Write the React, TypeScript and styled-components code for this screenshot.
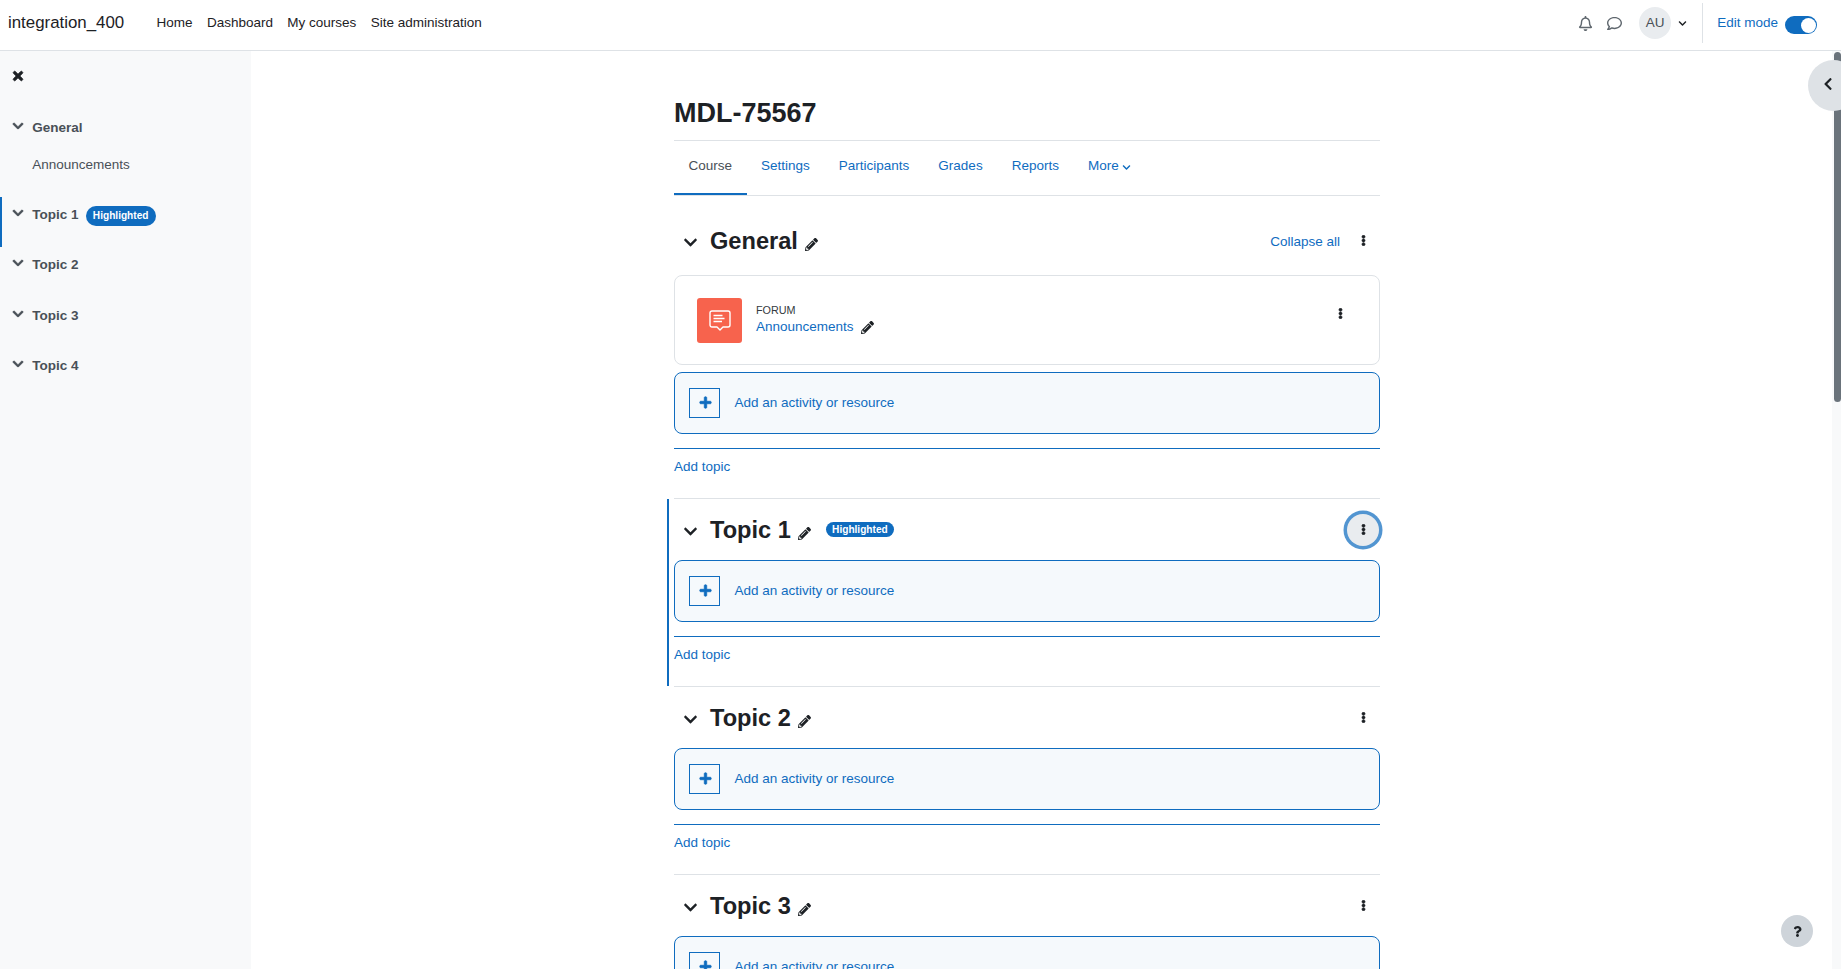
import React from "react";
import styled, { createGlobalStyle } from "styled-components";
import { FaChevronDown, FaChevronLeft, FaEllipsisV, FaPencilAlt, FaPlus, FaTimes, FaQuestion, FaRegBell, FaRegComment } from "react-icons/fa";

const Global = createGlobalStyle`
  * { box-sizing: border-box; }
  html, body { margin: 0; height: 100%; overflow: hidden; background: #fff; }
  body { font-family: "Liberation Sans", Arial, sans-serif; font-size: 13.5px; color: #1d2125; }
  a { text-decoration: none; color: inherit; }
`;

const Shell = styled.div`
  height: 969px;
  display: flex;
  flex-direction: column;
  position: relative;
  overflow: hidden;
`;

const TopBar = styled.header`
  height: 51px;
  flex: none;
  display: flex;
  align-items: center;
  background: #fff;
  border-bottom: 1px solid #dee2e6;
  padding: 0 24px 4px 8px;
`;

const Brand = styled.a`
  font-size: 16.875px;
  width: 148.5px;
  flex: none;
`;

const Nav = styled.nav`
  display: flex;
  gap: 14.4px;
  flex: 1;
  margin-top: -1px;
`;

const Tools = styled.div`
  display: flex;
  align-items: center;
  color: #5f676e;
`;

const ToolIcon = styled.span`
  display: flex;
  width: 15px;
  margin-right: 14px;
`;

const Avatar = styled.span`
  width: 32px;
  height: 32px;
  border-radius: 50%;
  background: #e9ecef;
  color: #495057;
  display: flex;
  align-items: center;
  justify-content: center;
  margin-left: 3px;
  padding-bottom: 1px;
`;

const Caret = styled.span`
  display: flex;
  color: #1d2125;
  margin: 1px 15px 0 7px;
`;

const Divider = styled.span`
  width: 1px;
  height: 40px;
  background: #dee2e6;
  margin-right: 14px;
`;

const EditLabel = styled.span`
  color: #0f6cbf;
  margin: -1px 7px 0 0;
`;

const Toggle = styled.span`
  width: 32px;
  height: 18px;
  margin-top: 4px;
  border-radius: 9px;
  background: #0f6cbf;
  display: flex;
  justify-content: flex-end;
  align-items: center;
  padding-right: 1.5px;
`;

const Knob = styled.span`
  width: 15px;
  height: 15px;
  border-radius: 50%;
  background: #fff;
`;

const Body = styled.div`
  flex: 1;
  min-height: 0;
  display: flex;
`;

const Drawer = styled.aside`
  width: 251px;
  flex: none;
  background: #f8f9fa;
  padding-top: 18px;
  color: #495057;
`;

const CloseButton = styled.div`
  display: flex;
  padding-left: 11px;
  height: 14px;
  align-items: center;
  color: #1d2125;
  margin-bottom: 27px;
  svg { stroke: currentColor; stroke-width: 30px; }
`;

const DrawerSection = styled.div<{ $active?: boolean; $height?: number }>`
  height: ${(p) => p.$height ?? 50.3}px;
  padding: 10px 0 0 ${(p) => (p.$active ? 10 : 12)}px;
  border-left: ${(p) => (p.$active ? "2px solid #0f6cbf" : "none")};
  display: flex;
  align-items: flex-start;
  font-weight: 700;
  line-height: 16px;
`;

const DrawerChevron = styled.span`
  display: flex;
  width: 20.3px;
  flex: none;
  svg { stroke: currentColor; stroke-width: 25px; }
`;

const DrawerSub = styled.div`
  padding: 10px 0 0 32.3px;
  height: 50px;
  line-height: 16px;
`;

const Pill = styled.span`
  background: #0f6cbf;
  color: #fff;
  font-size: 10.125px;
  font-weight: 700;
  border-radius: 10px;
  display: inline-flex;
  align-items: center;
  white-space: nowrap;
`;

const DrawerPill = styled(Pill)`
  height: 20px;
  padding: 0 7.3px;
  margin: -1.5px 0 0 7px;
`;

const Main = styled.main`
  flex: 1;
  min-width: 0;
  overflow: hidden;
`;

const Column = styled.div`
  width: 706px;
  margin-left: 423px;
`;

const Title = styled.h1`
  margin: 0;
  height: 90px;
  padding-top: 46px;
  font-size: 27px;
  line-height: 32px;
  font-weight: 700;
  border-bottom: 1px solid #dee2e6;
`;

const Tabs = styled.div`
  display: flex;
  height: 55px;
  border-bottom: 1px solid #dee2e6;
  color: #0f6cbf;
`;

const Tab = styled.a<{ $active?: boolean }>`
  padding: 17px 14.5px 0;
  height: 54px;
  color: ${(p) => (p.$active ? "#495057" : "#0f6cbf")};
  border-bottom: ${(p) => (p.$active ? "2px solid #0f6cbf" : "none")};
  display: flex;
  align-items: flex-start;
  line-height: 16px;
`;

const TabCaret = styled.span`
  display: inline-flex;
  margin: 5px 0 0 3.5px;
`;

const Section = styled.section<{ $active?: boolean; $first?: boolean }>`
  position: relative;
  padding: ${(p) => (p.$first ? 26 : 12)}px 0 23px;
  border-bottom: 1px solid #dee2e6;
  ${(p) =>
    p.$active &&
    `&::before {
      content: "";
      position: absolute;
      left: -7px;
      top: 0;
      bottom: 0;
      width: 2px;
      background: #0f6cbf;
    }`}
`;

const SectionHead = styled.div<{ $first?: boolean }>`
  height: 38px;
  display: flex;
  align-items: center;
  margin-bottom: ${(p) => (p.$first ? 15 : 11)}px;
`;

const Chevron = styled.span`
  display: flex;
  width: 36px;
  padding: 2px 0 0 9px;
  flex: none;
`;

const SectionName = styled.h3`
  margin: 0;
  font-size: 23.625px;
  font-weight: 700;
  line-height: 30px;
`;

const Pencil = styled.span`
  display: flex;
  margin: 6px 0 0 7px;
`;

const HeadPill = styled(Pill)`
  height: 15px;
  padding: 0 6.2px;
  margin: -1px 0 0 15px;
`;

const HeadRight = styled.div`
  margin-left: auto;
  display: flex;
  align-items: center;
  padding-right: 1px;
`;

const CollapseLink = styled.a`
  color: #0f6cbf;
  margin-right: 7px;
`;

const KebabButton = styled.span<{ $focus?: boolean }>`
  width: 32px;
  height: 32px;
  border-radius: 50%;
  display: flex;
  align-items: center;
  justify-content: center;
  padding-bottom: 1px;
  svg { stroke: currentColor; stroke-width: 30px; }
  ${(p) => p.$focus && `background: #e9ecef; box-shadow: 0 0 0 3.5px rgba(15,108,191,.72);`}
`;

const ActivityCard = styled.div`
  height: 90px;
  border: 1px solid #dee2e6;
  border-radius: 8px;
  display: flex;
  align-items: center;
  padding: 0 33px 0 22px;
  margin-bottom: 7px;
`;

const ForumIcon = styled.span`
  width: 45px;
  height: 45px;
  border-radius: 3px;
  background: #f7634d;
  display: flex;
  align-items: center;
  justify-content: center;
  flex: none;
  margin-right: 14px;
`;

const ActivityText = styled.div`
  flex: 1;
  display: flex;
  flex-direction: column;
  padding-top: 1px;
`;

const ActivityType = styled.span`
  font-size: 10.8px;
  line-height: 13px;
  color: #343a40;
`;

const ActivityName = styled.span`
  color: #0f6cbf;
  line-height: 20px;
  display: flex;
  align-items: center;
`;

const ActivityPencil = styled.span`
  display: flex;
  margin-left: 7px;
`;

const ActivityKebab = styled.span`
  display: flex;
  margin-top: -14px;
  svg { stroke: currentColor; stroke-width: 30px; }
`;

const AddActivity = styled.div`
  height: 62px;
  border: 1px solid #0f6cbf;
  border-radius: 8px;
  background: #f5f9fc;
  color: #0f6cbf;
  display: flex;
  align-items: center;
  padding-left: 14px;
`;

const PlusBox = styled.span`
  width: 31px;
  height: 30px;
  border: 1px solid #0f6cbf;
  display: flex;
  align-items: center;
  justify-content: center;
  margin-right: 14.5px;
  padding: 0 0 1px 1px;
  svg { stroke: currentColor; stroke-width: 30px; }
`;

const AddLabel = styled.span`
  margin-bottom: 2px;
`;

const AddTopic = styled.div`
  margin-top: 14px;
  border-top: 1px solid #0f6cbf;
  padding-top: 10px;
  line-height: 16px;
  color: #0f6cbf;
`;

const ScrollTrack = styled.div`
  position: absolute;
  right: 0;
  top: 51px;
  bottom: 0;
  width: 9px;
  background: #f8f9fa;
  padding: 1px 0 0 2px;
`;

const ScrollThumb = styled.div`
  height: 350px;
  border-radius: 4px;
  background: #6a737b;
`;

const DrawerToggle = styled.span`
  position: absolute;
  left: 1808px;
  top: 60px;
  width: 51px;
  height: 51px;
  border-radius: 50%;
  background: #dee2e6;
  display: flex;
  align-items: center;
  padding: 0 0 4px 12.5px;
`;

const HelpButton = styled.span`
  position: absolute;
  left: 1781px;
  top: 915px;
  width: 32px;
  height: 32px;
  border-radius: 50%;
  background: #ced4da;
  display: flex;
  align-items: center;
  justify-content: center;
`;

const Add = () => (
  <AddActivity>
    <PlusBox><FaPlus size={13} /></PlusBox>
    <AddLabel>Add an activity or resource</AddLabel>
  </AddActivity>
);

const topics = [1, 2, 3];

export default function App() {
  return (
    <Shell>
      <Global />
      <TopBar>
        <Brand>integration_400</Brand>
        <Nav>
          <a>Home</a>
          <a>Dashboard</a>
          <a>My courses</a>
          <a>Site administration</a>
        </Nav>
        <Tools>
          <ToolIcon><FaRegBell size={15} /></ToolIcon>
          <ToolIcon><FaRegComment size={15} /></ToolIcon>
          <Avatar>AU</Avatar>
          <Caret><FaChevronDown size={9} /></Caret>
          <Divider />
          <EditLabel>Edit mode</EditLabel>
          <Toggle><Knob /></Toggle>
        </Tools>
      </TopBar>
      <Body>
        <Drawer>
          <CloseButton><FaTimes size={14} /></CloseButton>
          <DrawerSection $height={37}>
            <DrawerChevron><FaChevronDown size={12} /></DrawerChevron>
            General
          </DrawerSection>
          <DrawerSub>Announcements</DrawerSub>
          <DrawerSection $active>
            <DrawerChevron><FaChevronDown size={12} /></DrawerChevron>
            Topic 1
            <DrawerPill>Highlighted</DrawerPill>
          </DrawerSection>
          {[2, 3, 4].map((n) => (
            <DrawerSection key={n}>
              <DrawerChevron><FaChevronDown size={12} /></DrawerChevron>
              Topic {n}
            </DrawerSection>
          ))}
        </Drawer>
        <Main>
          <Column>
            <Title>MDL-75567</Title>
            <Tabs>
              <Tab $active>Course</Tab>
              <Tab>Settings</Tab>
              <Tab>Participants</Tab>
              <Tab>Grades</Tab>
              <Tab>Reports</Tab>
              <Tab>More<TabCaret><FaChevronDown size={9} /></TabCaret></Tab>
            </Tabs>
            <Section $first>
              <SectionHead $first>
                <Chevron><FaChevronDown size={15} /></Chevron>
                <SectionName>General</SectionName>
                <Pencil><FaPencilAlt size={13} /></Pencil>
                <HeadRight>
                  <CollapseLink>Collapse all</CollapseLink>
                  <KebabButton><FaEllipsisV size={11} /></KebabButton>
                </HeadRight>
              </SectionHead>
              <ActivityCard>
                <ForumIcon>
                  <svg width="22" height="21" viewBox="0 0 22 21" fill="none" stroke="#fff" strokeWidth="1.4" strokeLinejoin="round">
                    <path d="M3 1h16a2 2 0 0 1 2 2v12a2 2 0 0 1-2 2h-5l-3 3-3-3H3a2 2 0 0 1-2-2V3a2 2 0 0 1 2-2z" />
                    <path d="M4.5 5.5h9M4.5 8.5h11M4.5 11.5h8.5" />
                  </svg>
                </ForumIcon>
                <ActivityText>
                  <ActivityType>FORUM</ActivityType>
                  <ActivityName>
                    Announcements
                    <ActivityPencil><FaPencilAlt size={13} color="#1d2125" /></ActivityPencil>
                  </ActivityName>
                </ActivityText>
                <ActivityKebab><FaEllipsisV size={11} /></ActivityKebab>
              </ActivityCard>
              <Add />
              <AddTopic>Add topic</AddTopic>
            </Section>
            {topics.map((n) => (
              <Section key={n} $active={n === 1}>
                <SectionHead>
                  <Chevron><FaChevronDown size={15} /></Chevron>
                  <SectionName>Topic {n}</SectionName>
                  <Pencil><FaPencilAlt size={13} /></Pencil>
                  {n === 1 && <HeadPill>Highlighted</HeadPill>}
                  <HeadRight>
                    <KebabButton $focus={n === 1}><FaEllipsisV size={11} /></KebabButton>
                  </HeadRight>
                </SectionHead>
                <Add />
                <AddTopic>Add topic</AddTopic>
              </Section>
            ))}
          </Column>
        </Main>
      </Body>
      <ScrollTrack><ScrollThumb /></ScrollTrack>
      <DrawerToggle><FaChevronLeft size={14} /></DrawerToggle>
      <HelpButton><FaQuestion size={11} /></HelpButton>
    </Shell>
  );
}
